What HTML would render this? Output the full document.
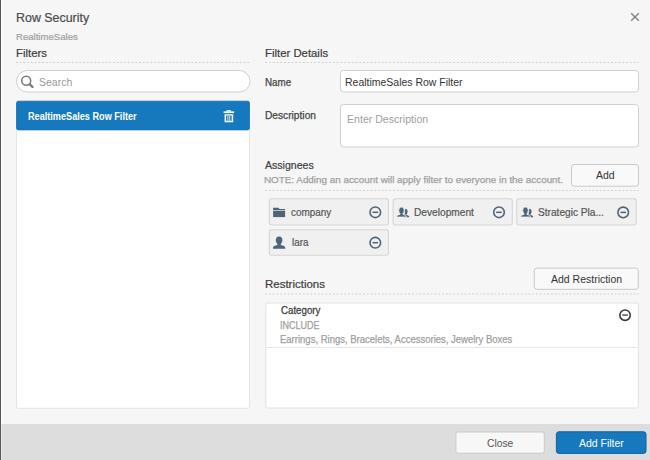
<!DOCTYPE html>
<html><head><meta charset="utf-8">
<style>
*{box-sizing:border-box;margin:0;padding:0}
html,body{width:650px;height:460px;overflow:hidden;background:#f6f6f6;font-family:"Liberation Sans",sans-serif}
svg{position:absolute;left:0;top:0}
.t{position:absolute;white-space:nowrap;transform-origin:0 0}
</style></head><body>
<svg width="650" height="460" viewBox="0 0 650 460">
<defs>
<pattern id="dashL" x="16" y="0" width="3.73" height="1" patternUnits="userSpaceOnUse"><rect x="0" y="0" width="1.9" height="1" fill="#cfcfcf"/></pattern>
<pattern id="dashR" x="265.2" y="0" width="3.76" height="1" patternUnits="userSpaceOnUse"><rect x="0" y="0" width="1.9" height="1" fill="#cfcfcf"/></pattern>
</defs>
<rect x="1" y="0" width="1" height="424" fill="#fff"/>
<!-- close X -->
<path d="M631.2 13.2 L638.8 20.8 M638.8 13.2 L631.2 20.8" stroke="#828282" stroke-width="1.4"/>
<!-- dashed lines -->
<rect x="16" y="62" width="234" height="1" fill="url(#dashL)"/>
<rect x="265" y="62" width="374" height="1" fill="url(#dashR)"/>
<rect x="265" y="190" width="374" height="1" fill="url(#dashR)"/>
<rect x="265" y="293.5" width="374" height="1" fill="url(#dashR)"/>
<!-- search -->
<rect x="16.5" y="70.5" width="233.5" height="21.5" rx="10.75" fill="#fff" stroke="#cfcfcf"/>
<circle cx="26.2" cy="80.7" r="4.5" fill="none" stroke="#7a7a7a" stroke-width="1.5"/>
<path d="M30.1 84.7 L32.5 87.0" stroke="#7a7a7a" stroke-width="2.3" stroke-linecap="round"/>
<!-- left panel -->
<rect x="16.5" y="100.5" width="233" height="307.8" rx="2" fill="#fff" stroke="#e4e4e4"/>
<rect x="16.5" y="101.3" width="233" height="28.6" rx="2" fill="#1679bd" stroke="#1270b4" stroke-width="0.8"/>
<!-- trash -->
<g fill="#fff">
<rect x="226.5" y="110.2" width="4.5" height="1.4"/>
<rect x="223.6" y="111.4" width="10.5" height="1.7"/>
<path d="M224.6 114.3 H233.2 V122.2 H224.6 Z M226.1 115.6 V120.8 H231.7 V115.6 Z" fill-rule="evenodd"/>
<rect x="227.5" y="115.6" width="0.8" height="5.2"/>
<rect x="229.4" y="115.6" width="0.8" height="5.2"/>
</g>
<!-- name input / textarea -->
<rect x="340.5" y="70.5" width="298" height="21.5" rx="3" fill="#fff" stroke="#cfcfcf"/>
<rect x="340.5" y="104.5" width="298" height="42.5" rx="3" fill="#fff" stroke="#cfcfcf"/>
<!-- Add button -->
<rect x="571.5" y="164.5" width="67" height="21.7" rx="2.5" fill="#f9f9f9" stroke="#c9c9c9"/>
<!-- chips -->
<g fill="#f0f0f0" stroke="#d5d5d5" stroke-width="1.05">
<rect x="269.3" y="198.7" width="119.2" height="26.3" rx="2.5"/>
<rect x="393.1" y="198.7" width="119.2" height="26.3" rx="2.5"/>
<rect x="516.7" y="198.7" width="119.6" height="26.3" rx="2.5"/>
<rect x="269.3" y="229.7" width="119.2" height="25.6" rx="2.5"/>
</g>
<g fill="#506478">
<!-- folder -->
<path d="M273.1 207.7 H278.3 L279.6 209 H285.1 V210.3 H273.1 Z"/>
<rect x="273.1" y="210.9" width="12" height="6.2"/>
<!-- person lara -->
<path d="M279.1 236.5 c-2.2 0 -3.3 1.6 -3.3 3.6 c0 1.6 0.6 3.1 1.6 3.9 v0.9 c-2.6 0.6 -4.4 1.4 -4.4 2.6 v1.2 h12.2 v-1.2 c0 -1.2 -1.8 -2 -4.4 -2.6 v-0.9 c1 -0.8 1.6 -2.3 1.6 -3.9 c0 -2 -1.1 -3.6 -3.3 -3.6 z"/>
</g>
<g id="grp">
<path fill="#506478" d="M405.3 208.8 c1.5 0 2.3 1.2 2.3 2.7 c0 1.2 -0.4 2.2 -1.1 2.8 v0.6 c1.8 0.4 2.7 1 2.7 1.8 v0.6 h-5 z"/>
<path fill="#506478" stroke="#f0f0f0" stroke-width="0.9" d="M401.5 207.1 c-1.8 0 -2.8 1.4 -2.8 3.2 c0 1.4 0.5 2.6 1.3 3.3 v0.8 c-2.2 0.5 -3.3 1.1 -3.3 2 v0.7 h9.6 v-0.7 c0 -0.9 -1.1 -1.5 -3.3 -2 v-0.8 c0.8 -0.7 1.3 -1.9 1.3 -3.3 c0 -1.8 -1 -3.2 -2.8 -3.2 z"/>
</g>
<use href="#grp" x="124" y="0"/>
<g fill="none" stroke="#506478" stroke-width="1.6">
<circle cx="375.3" cy="212.3" r="5.3"/>
<circle cx="499" cy="212.3" r="5.3"/>
<circle cx="623.2" cy="212.4" r="5.3"/>
<circle cx="375.3" cy="242.7" r="5.3"/>
</g>
<g fill="#506478">
<rect x="372.5" y="211.55" width="5.6" height="1.5"/>
<rect x="496.2" y="211.55" width="5.6" height="1.5"/>
<rect x="620.4" y="211.65" width="5.6" height="1.5"/>
<rect x="372.5" y="241.95" width="5.6" height="1.5"/>
</g>
<!-- Add Restriction button -->
<rect x="534.3" y="268.1" width="104" height="21.2" rx="2.5" fill="#f9f9f9" stroke="#c9c9c9"/>
<!-- restrictions box -->
<rect x="265.8" y="303" width="372.6" height="105" rx="2" fill="#fff" stroke="#e2e2e2"/>
<rect x="266.3" y="346.9" width="371.6" height="1" fill="#e6e6e6"/>
<circle cx="625.05" cy="315.15" r="5.2" fill="none" stroke="#3a3a3a" stroke-width="1.6"/>
<rect x="622.3" y="314.4" width="5.6" height="1.3" fill="#3a3a3a"/>
<!-- footer -->
<rect x="0" y="424" width="650" height="36" fill="#dddddd"/>
<rect x="1" y="424" width="1" height="36" fill="#ececec"/>
<rect x="0" y="0" width="1" height="460" fill="#53575b"/>
<rect x="455.9" y="432" width="88.4" height="21.2" rx="2" fill="#f7f7f7" stroke="#cacaca"/>
<rect x="556.4" y="431.8" width="89.6" height="21.6" rx="2.5" fill="#1679bd" stroke="#0f609e"/>
</svg>
<div id="t_title" class="t" style="left:15.73px;top:11.64px;font-size:12.20px;line-height:12.20px;color:#4a4a4a;font-weight:400;transform:scaleX(1.0192);-webkit-text-stroke:0.2px #4a4a4a">Row Security</div>
<div id="t_sub" class="t" style="left:15.96px;top:32.93px;font-size:9.20px;line-height:9.20px;color:#a0a0a0;font-weight:400;transform:scaleX(1.0425);-webkit-text-stroke:0.2px #a0a0a0">RealtimeSales</div>
<div id="t_filters" class="t" style="left:15.82px;top:48.42px;font-size:10.90px;line-height:10.90px;color:#3d3d3d;font-weight:400;transform:scaleX(1.0429);-webkit-text-stroke:0.2px #3d3d3d">Filters</div>
<div id="t_search" class="t" style="left:39.17px;top:77.58px;font-size:10.45px;line-height:10.45px;color:#9a9a9a;font-weight:400;transform:scaleX(1.0045);">Search</div>
<div id="t_sel" class="t" style="left:27.64px;top:111.99px;font-size:10.35px;line-height:10.35px;color:#ffffff;font-weight:700;transform:scaleX(0.8827);">RealtimeSales Row Filter</div>
<div id="t_fd" class="t" style="left:264.72px;top:48.42px;font-size:10.90px;line-height:10.90px;color:#3d3d3d;font-weight:400;transform:scaleX(1.0425);-webkit-text-stroke:0.2px #3d3d3d">Filter Details</div>
<div id="t_name" class="t" style="left:264.85px;top:77.27px;font-size:10.60px;line-height:10.60px;color:#444444;font-weight:400;transform:scaleX(0.9245);-webkit-text-stroke:0.25px #444">Name</div>
<div id="t_namev" class="t" style="left:344.69px;top:77.58px;font-size:10.45px;line-height:10.45px;color:#333333;font-weight:400;transform:scaleX(1.0036);">RealtimeSales Row Filter</div>
<div id="t_desc" class="t" style="left:264.81px;top:110.07px;font-size:10.60px;line-height:10.60px;color:#444444;font-weight:400;transform:scaleX(0.9619);-webkit-text-stroke:0.25px #444">Description</div>
<div id="t_descv" class="t" style="left:347.18px;top:114.79px;font-size:10.45px;line-height:10.45px;color:#a0a0a0;font-weight:400;transform:scaleX(1.0138);">Enter Description</div>
<div id="t_asg" class="t" style="left:265.13px;top:159.62px;font-size:10.90px;line-height:10.90px;color:#3d3d3d;font-weight:400;transform:scaleX(0.9684);-webkit-text-stroke:0.2px #3d3d3d">Assignees</div>
<div id="t_note" class="t" style="left:264.44px;top:174.97px;font-size:9.70px;line-height:9.70px;color:#a0a0a0;font-weight:400;transform:scaleX(1.0172);-webkit-text-stroke:0.25px #a0a0a0">NOTE: Adding an account will apply filter to everyone in the account.</div>
<div id="t_add" class="t" style="left:595.73px;top:171.48px;font-size:10.45px;line-height:10.45px;color:#333333;font-weight:400;transform:scaleX(1.0056);">Add</div>
<div id="t_company" class="t" style="left:290.73px;top:207.87px;font-size:10.30px;line-height:10.30px;color:#555555;font-weight:400;transform:scaleX(0.9604);-webkit-text-stroke:0.2px #555">company</div>
<div id="t_dev" class="t" style="left:413.92px;top:208.29px;font-size:10.30px;line-height:10.30px;color:#555555;font-weight:400;transform:scaleX(0.9871);-webkit-text-stroke:0.2px #555">Development</div>
<div id="t_strat" class="t" style="left:538.29px;top:208.09px;font-size:10.30px;line-height:10.30px;color:#555555;font-weight:400;transform:scaleX(0.9837);-webkit-text-stroke:0.2px #555">Strategic Pla...</div>
<div id="t_lara" class="t" style="left:292.08px;top:237.59px;font-size:10.30px;line-height:10.30px;color:#555555;font-weight:400;transform:scaleX(0.9587);-webkit-text-stroke:0.2px #555">lara</div>
<div id="t_restr" class="t" style="left:264.81px;top:278.82px;font-size:10.90px;line-height:10.90px;color:#3d3d3d;font-weight:400;transform:scaleX(1.0548);-webkit-text-stroke:0.2px #3d3d3d">Restrictions</div>
<div id="t_addr" class="t" style="left:550.73px;top:274.78px;font-size:10.45px;line-height:10.45px;color:#333333;font-weight:400;transform:scaleX(1.0048);">Add Restriction</div>
<div id="t_cat" class="t" style="left:280.66px;top:305.74px;font-size:10.20px;line-height:10.20px;color:#444444;font-weight:400;transform:scaleX(0.9523);-webkit-text-stroke:0.3px #444">Category</div>
<div id="t_incl" class="t" style="left:280.32px;top:320.52px;font-size:10.30px;line-height:10.30px;color:#a0a0a0;font-weight:400;transform:scaleX(0.8763);-webkit-text-stroke:0.25px #a0a0a0">INCLUDE</div>
<div id="t_vals" class="t" style="left:280.37px;top:335.49px;font-size:10.30px;line-height:10.30px;color:#a0a0a0;font-weight:400;transform:scaleX(0.9227);-webkit-text-stroke:0.25px #a0a0a0">Earrings, Rings, Bracelets, Accessories, Jewelry Boxes</div>
<div id="t_close" class="t" style="left:486.53px;top:438.78px;font-size:10.45px;line-height:10.45px;color:#555555;font-weight:400;transform:scaleX(0.9875);">Close</div>
<div id="t_addf" class="t" style="left:578.83px;top:438.68px;font-size:10.45px;line-height:10.45px;color:#ffffff;font-weight:400;transform:scaleX(1.0039);">Add Filter</div>
</body></html>
